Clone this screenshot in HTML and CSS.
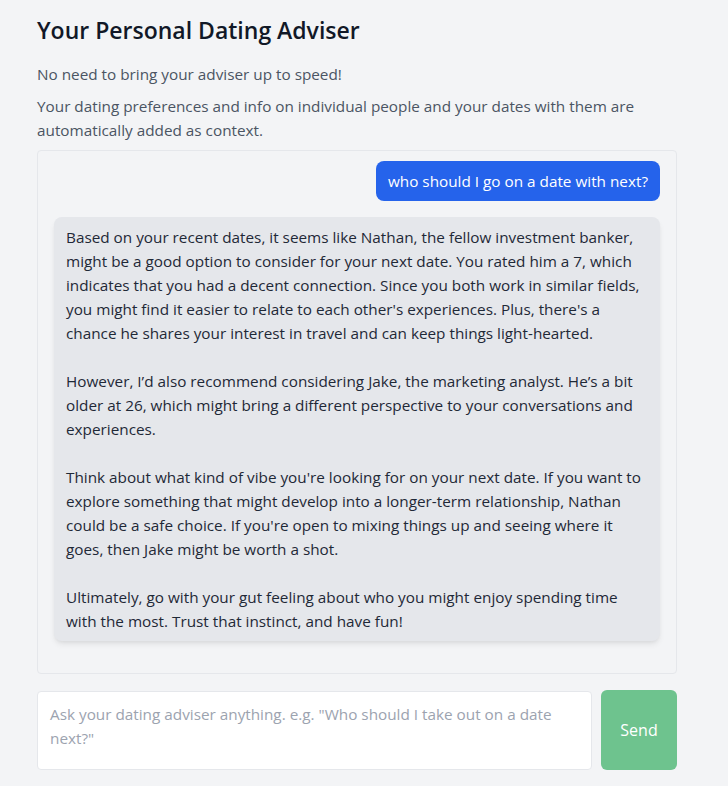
FILE: index.html
```html
<!DOCTYPE html>
<html lang="en">
<head>
<meta charset="utf-8">
<title>Your Personal Dating Adviser</title>
<link rel="stylesheet" href="styles.css">
</head>
<body>
<main class="page">
  <h1 class="title">Your Personal Dating Adviser</h1>
  <p class="intro">No need to bring your adviser up to speed!</p>
  <p class="intro intro-second">Your dating preferences and info on individual people and your dates with them are automatically added as context.</p>

  <section class="chat">
    <div class="msg-row msg-row-user">
      <div class="bubble bubble-user">who should I go on a date with next?</div>
    </div>
    <div class="msg-row msg-row-bot">
      <div class="bubble bubble-bot">Based on your recent dates, it seems like Nathan, the fellow investment banker, might be a good option to consider for your next date. You rated him a 7, which indicates that you had a decent connection. Since you both work in similar fields, you might find it easier to relate to each other's experiences. Plus, there's a chance he shares your interest in travel and can keep things light-hearted.

However, I’d also recommend considering Jake, the marketing analyst. He’s a bit older at 26, which might bring a different perspective to your conversations and experiences.

Think about what kind of vibe you're looking for on your next date. If you want to explore something that might develop into a longer-term relationship, Nathan could be a safe choice. If you're open to mixing things up and seeing where it goes, then Jake might be worth a shot.

Ultimately, go with your gut feeling about who you might enjoy spending time with the most. Trust that instinct, and have fun!</div>
    </div>
  </section>

  <form class="composer">
    <textarea class="composer-input" placeholder="Ask your dating adviser anything. e.g. &quot;Who should I take out on a date next?&quot;"></textarea>
    <button type="button" class="composer-send">Send</button>
  </form>
</main>
</body>
</html>
```
FILE: styles.css
```css
* { box-sizing: border-box; }

html, body {
  margin: 0;
  background: #f3f4f6;
}

body {
  font-family: "Open Sans", "Noto Sans", sans-serif;
  font-size: 15.3px;
  line-height: 24px;
  color: #1f2937;
}

.page {
  width: 640px;
  margin-left: 37px;
  padding-top: 14px;
}

.title {
  margin: 0;
  font-size: 23px;
  line-height: 32px;
  font-weight: 600;
  color: #111827;
}

.intro {
  margin: 16px 0 0;
  color: #4b5563;
}

.intro-second {
  margin-top: 8px;
}

.chat {
  margin-top: 8px;
  border: 1px solid #e5e7eb;
  border-radius: 4px;
  background: #f3f4f6;
  padding: 10px 16px 32px;
  display: flex;
  flex-direction: column;
  gap: 16px;
}

.msg-row {
  display: flex;
}

.msg-row-user {
  justify-content: flex-end;
}

.bubble {
  padding: 8px 12px;
  border-radius: 8px;
}

.bubble-user {
  background: #2563eb;
  color: #ffffff;
}

.bubble-bot {
  width: 100%;
  background: #e5e7eb;
  color: #1f2937;
  white-space: pre-line;
  box-shadow: 0 4px 6px -1px rgba(0, 0, 0, 0.08), 0 2px 4px -2px rgba(0, 0, 0, 0.08);
}

.composer {
  margin: 16px 0 0;
  display: flex;
  gap: 9px;
}

.composer-input {
  flex: 1;
  height: 79px;
  margin-top: 1px;
  resize: none;
  border: 1px solid #e5e7eb;
  border-radius: 4px;
  background: #ffffff;
  padding: 10px 12px;
  font: inherit;
  color: #1f2937;
  outline: none;
}

.composer-input::placeholder {
  color: #9ca3af;
}

.composer-send {
  width: 76px;
  height: 80px;
  border: 0;
  border-radius: 6px;
  background: #6ec38e;
  color: #ffffff;
  font: inherit;
  font-size: 16px;
  cursor: pointer;
}
```
